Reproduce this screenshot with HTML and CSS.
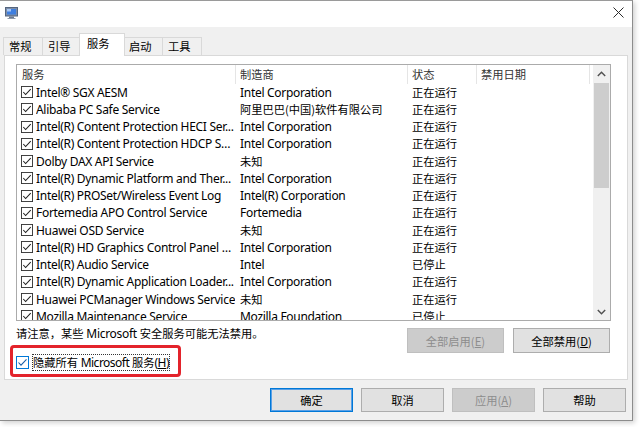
FILE: index.html
```html
<!DOCTYPE html>
<html lang="zh-CN">
<head>
<meta charset="utf-8">
<title>系统配置</title>
<link rel="stylesheet" href="styles.css">
</head>
<body>
<div class="window">
  <div class="titlebar">
    <svg class="app-icon" width="13" height="12" viewBox="0 0 13 12">
      <rect x="0.5" y="0.5" width="12" height="8.5" fill="#7d8ea8" stroke="#55657e"/>
      <rect x="2" y="2" width="9" height="5.5" fill="#3f7fe0"/>
      <rect x="2" y="2" width="4" height="2.5" fill="#a9c8f5"/>
      <rect x="4" y="9.5" width="5" height="1.5" fill="#6d7b90"/>
      <rect x="2.5" y="11" width="8" height="1" fill="#8f9aab"/>
    </svg>
    <span class="close" aria-label="关闭">
      <svg width="11" height="11" viewBox="0 0 11 11"><path d="M0.5 0.5 L10.5 10.5 M10.5 0.5 L0.5 10.5" stroke="#2b2b2b" stroke-width="1"/></svg>
    </span>
  </div>
  <div class="client">
    <div class="tabs">
      <div class="tab">常规</div>
      <div class="tab">引导</div>
      <div class="tab active">服务</div>
      <div class="tab">启动</div>
      <div class="tab">工具</div>
    </div>
    <div class="panel">
      <div class="listview">
        <div class="list-main">
          <div class="lv-header">
            <div class="hcell first">服务</div>
            <div class="hcell">制造商</div>
            <div class="hcell">状态</div>
            <div class="hcell">禁用日期</div>
          </div>
          <div class="rows">
            <div class="row"><div class="c1"><svg class="cb" viewBox="0 0 13 13"><rect x="0.5" y="0.5" width="12" height="12"/><polyline points="2.5,6.5 5,9.2 10.5,3.3"/></svg><span class="txt">Intel® SGX AESM</span></div><div class="c2">Intel Corporation</div><div class="c3">正在运行</div><div class="c4"></div></div>
            <div class="row"><div class="c1"><svg class="cb" viewBox="0 0 13 13"><rect x="0.5" y="0.5" width="12" height="12"/><polyline points="2.5,6.5 5,9.2 10.5,3.3"/></svg><span class="txt">Alibaba PC Safe Service</span></div><div class="c2 zh">阿里巴巴(中国)软件有限公司</div><div class="c3">正在运行</div><div class="c4"></div></div>
            <div class="row"><div class="c1"><svg class="cb" viewBox="0 0 13 13"><rect x="0.5" y="0.5" width="12" height="12"/><polyline points="2.5,6.5 5,9.2 10.5,3.3"/></svg><span class="txt">Intel(R) Content Protection HECI Ser...</span></div><div class="c2">Intel Corporation</div><div class="c3">正在运行</div><div class="c4"></div></div>
            <div class="row"><div class="c1"><svg class="cb" viewBox="0 0 13 13"><rect x="0.5" y="0.5" width="12" height="12"/><polyline points="2.5,6.5 5,9.2 10.5,3.3"/></svg><span class="txt">Intel(R) Content Protection HDCP Se...</span></div><div class="c2">Intel Corporation</div><div class="c3">正在运行</div><div class="c4"></div></div>
            <div class="row"><div class="c1"><svg class="cb" viewBox="0 0 13 13"><rect x="0.5" y="0.5" width="12" height="12"/><polyline points="2.5,6.5 5,9.2 10.5,3.3"/></svg><span class="txt">Dolby DAX API Service</span></div><div class="c2 zh">未知</div><div class="c3">正在运行</div><div class="c4"></div></div>
            <div class="row"><div class="c1"><svg class="cb" viewBox="0 0 13 13"><rect x="0.5" y="0.5" width="12" height="12"/><polyline points="2.5,6.5 5,9.2 10.5,3.3"/></svg><span class="txt">Intel(R) Dynamic Platform and Ther...</span></div><div class="c2">Intel Corporation</div><div class="c3">正在运行</div><div class="c4"></div></div>
            <div class="row"><div class="c1"><svg class="cb" viewBox="0 0 13 13"><rect x="0.5" y="0.5" width="12" height="12"/><polyline points="2.5,6.5 5,9.2 10.5,3.3"/></svg><span class="txt">Intel(R) PROSet/Wireless Event Log</span></div><div class="c2">Intel(R) Corporation</div><div class="c3">正在运行</div><div class="c4"></div></div>
            <div class="row"><div class="c1"><svg class="cb" viewBox="0 0 13 13"><rect x="0.5" y="0.5" width="12" height="12"/><polyline points="2.5,6.5 5,9.2 10.5,3.3"/></svg><span class="txt">Fortemedia APO Control Service</span></div><div class="c2">Fortemedia</div><div class="c3">正在运行</div><div class="c4"></div></div>
            <div class="row"><div class="c1"><svg class="cb" viewBox="0 0 13 13"><rect x="0.5" y="0.5" width="12" height="12"/><polyline points="2.5,6.5 5,9.2 10.5,3.3"/></svg><span class="txt">Huawei OSD Service</span></div><div class="c2 zh">未知</div><div class="c3">正在运行</div><div class="c4"></div></div>
            <div class="row"><div class="c1"><svg class="cb" viewBox="0 0 13 13"><rect x="0.5" y="0.5" width="12" height="12"/><polyline points="2.5,6.5 5,9.2 10.5,3.3"/></svg><span class="txt">Intel(R) HD Graphics Control Panel S...</span></div><div class="c2">Intel Corporation</div><div class="c3">正在运行</div><div class="c4"></div></div>
            <div class="row"><div class="c1"><svg class="cb" viewBox="0 0 13 13"><rect x="0.5" y="0.5" width="12" height="12"/><polyline points="2.5,6.5 5,9.2 10.5,3.3"/></svg><span class="txt">Intel(R) Audio Service</span></div><div class="c2">Intel</div><div class="c3">已停止</div><div class="c4"></div></div>
            <div class="row"><div class="c1"><svg class="cb" viewBox="0 0 13 13"><rect x="0.5" y="0.5" width="12" height="12"/><polyline points="2.5,6.5 5,9.2 10.5,3.3"/></svg><span class="txt">Intel(R) Dynamic Application Loader...</span></div><div class="c2">Intel Corporation</div><div class="c3">正在运行</div><div class="c4"></div></div>
            <div class="row"><div class="c1"><svg class="cb" viewBox="0 0 13 13"><rect x="0.5" y="0.5" width="12" height="12"/><polyline points="2.5,6.5 5,9.2 10.5,3.3"/></svg><span class="txt">Huawei PCManager Windows Service</span></div><div class="c2 zh">未知</div><div class="c3">正在运行</div><div class="c4"></div></div>
            <div class="row"><div class="c1"><svg class="cb" viewBox="0 0 13 13"><rect x="0.5" y="0.5" width="12" height="12"/><polyline points="2.5,6.5 5,9.2 10.5,3.3"/></svg><span class="txt">Mozilla Maintenance Service</span></div><div class="c2">Mozilla Foundation</div><div class="c3">已停止</div><div class="c4"></div></div>
          </div>
        </div>
        <div class="scrollbar">
          <div class="sb-btn"><svg width="9" height="6" viewBox="0 0 9 6"><polyline points="0.8,5 4.5,1.2 8.2,5" fill="none" stroke="#505050" stroke-width="1.4"/></svg></div>
          <div class="sb-track"><div class="sb-thumb"></div></div>
          <div class="sb-btn"><svg width="9" height="6" viewBox="0 0 9 6"><polyline points="0.8,1 4.5,4.8 8.2,1" fill="none" stroke="#505050" stroke-width="1.4"/></svg></div>
        </div>
      </div>
      <div class="bottom">
        <div class="left-col">
          <div class="note"><span class="zh">请注意，某些</span> Microsoft <span class="zh">安全服务可能无法禁用。</span></div>
          <div class="highlight">
            <svg class="cb blue" viewBox="0 0 13 13"><rect x="0.5" y="0.5" width="12" height="12"/><polyline points="2.5,6.5 5,9.2 10.5,3.3"/></svg>
            <span class="focus-label"><span class="zh">隐藏所有</span> Microsoft <span class="zh">服务</span>(<u>H</u>)</span>
          </div>
        </div>
        <div class="actions">
          <button class="btn disabled" disabled>全部启用(<u>E</u>)</button>
          <button class="btn">全部禁用(<u>D</u>)</button>
        </div>
      </div>
    </div>
    <div class="footer">
      <button class="btn fbtn default">确定</button>
      <button class="btn fbtn">取消</button>
      <button class="btn fbtn disabled" disabled>应用(<u>A</u>)</button>
      <button class="btn fbtn">帮助</button>
    </div>
  </div>
</div>
</body>
</html>
```

FILE: styles.css
```css
html, body {
  margin: 0;
  padding: 0;
  background: #ffffff;
}

body {
  width: 640px;
  height: 427px;
  overflow: hidden;
  font-family: "Noto Sans", "Noto Sans CJK SC", sans-serif;
  font-size: 12px;
  letter-spacing: -0.3px;
  color: #000;
}

.zh {
  font-family: "Noto Sans CJK SC", sans-serif;
  font-size: 11.25px;
  letter-spacing: 0;
}

.window {
  width: 633px;
  height: 421px;
  box-sizing: border-box;
  border-top: 1px solid #9a9a9a;
  border-right: 1px solid #8c8c8c;
  border-bottom: 1px solid #8c8c8c;
  background: #f0f0f0;
  box-shadow: 2px 2px 5px rgba(0, 0, 0, 0.18);
  display: flex;
  flex-direction: column;
}

.titlebar {
  height: 26px;
  background: #ffffff;
  display: flex;
  align-items: center;
  justify-content: space-between;
  padding: 0 8px 0 5px;
  flex-shrink: 0;
}

.app-icon {
  display: block;
  margin-top: -2px;
}

.close {
  display: flex;
  width: 11px;
  height: 11px;
  margin-top: -3px;
}

.client {
  flex: 1;
  display: flex;
  flex-direction: column;
  padding-top: 6px;
}

.tabs {
  display: flex;
  align-items: flex-end;
  height: 22px;
  padding-left: 3px;
  position: relative;
  z-index: 2;
}

.tab {
  box-sizing: border-box;
  width: 40px;
  height: 18px;
  margin-right: -1px;
  padding-left: 5px;
  border: 1px solid #d9d9d9;
  border-bottom: none;
  background: #f0f0f0;
  line-height: 16px;
  font-family: "Noto Sans CJK SC", sans-serif;
  font-size: 11.25px;
  letter-spacing: 0;
  color: #000;
}

.tab.active {
  width: 46px;
  height: 23px;
  margin: 0 -2px -1px -2px;
  padding-left: 7px;
  background: #ffffff;
  line-height: 18px;
  position: relative;
  z-index: 3;
}

.panel {
  box-sizing: border-box;
  width: 624px;
  height: 325px;
  margin-left: 4px;
  background: #ffffff;
  border: 1px solid #d9d9d9;
  padding: 8px 0 0 11px;
  position: relative;
  z-index: 1;
}

.listview {
  box-sizing: border-box;
  width: 595px;
  height: 257px;
  border: 1px solid #ababab;
  display: flex;
  background: #ffffff;
}

.list-main {
  flex: 1;
  overflow: hidden;
  display: flex;
  flex-direction: column;
}

.lv-header {
  display: grid;
  grid-template-columns: 219px 172px 69px 113px;
  height: 18.5px;
  flex-shrink: 0;
}

.hcell {
  padding-left: 4px;
  border-right: 1px solid #e5e5e5;
  line-height: 18px;
  color: #333;
  font-family: "Noto Sans CJK SC", sans-serif;
  font-size: 11.25px;
  letter-spacing: 0;
}

.hcell.first {
  padding-left: 5px;
}

.rows {
  overflow: hidden;
  flex: 1;
}

.row {
  display: grid;
  grid-template-columns: 219px 172px 69px 1fr;
  height: 17.25px;
  align-items: center;
  line-height: 17px;
  white-space: nowrap;
}

.c1 {
  display: flex;
  align-items: center;
  padding-left: 4px;
  overflow: hidden;
}

.c2, .c3 {
  padding-left: 4px;
  overflow: hidden;
  text-overflow: ellipsis;
}

.c3 {
  font-family: "Noto Sans CJK SC", sans-serif;
  font-size: 11.25px;
  letter-spacing: 0;
}

.txt {
  overflow: hidden;
  text-overflow: ellipsis;
}

.cb {
  width: 12px;
  height: 12px;
  flex-shrink: 0;
  margin-right: 3px;
}

.cb rect {
  fill: #ffffff;
  stroke: #333333;
  stroke-width: 1;
}

.cb polyline {
  fill: none;
  stroke: #1e1e1e;
  stroke-width: 1.1;
}

.cb.blue rect {
  stroke: #0078d7;
}

.cb.blue polyline {
  stroke: #1a5fa8;
}

.scrollbar {
  width: 17px;
  background: #f0f0f0;
  display: flex;
  flex-direction: column;
}

.sb-btn {
  height: 17px;
  display: flex;
  align-items: center;
  justify-content: center;
  flex-shrink: 0;
}

.sb-track {
  flex: 1;
  padding: 1px 1px 0 1px;
}

.sb-thumb {
  height: 105px;
  background: #cdcdcd;
}

.bottom {
  display: grid;
  grid-template-columns: 1fr auto;
  margin-top: 5px;
}

.note {
  line-height: 15px;
  color: #000;
}

.highlight {
  box-sizing: border-box;
  width: 171px;
  height: 32px;
  margin: 4px 0 0 -6px;
  border: 3px solid #e3232b;
  border-radius: 4px;
  display: flex;
  align-items: center;
  padding-left: 3px;
  padding-top: 2px;
}

.highlight .cb {
  width: 13px;
  height: 13px;
  margin-right: 3px;
}

.focus-label {
  border: 1px dotted #333;
  padding: 0;
  line-height: 14px;
  white-space: nowrap;
  letter-spacing: -0.5px;
}

.actions {
  display: flex;
  gap: 9px;
  margin: 2px 17px 0 0;
  align-self: start;
}

.btn {
  box-sizing: border-box;
  width: 97px;
  height: 25px;
  background: #e1e1e1;
  border: 1px solid #adadad;
  font-family: "Noto Sans CJK SC", sans-serif;
  font-size: 11.25px;
  letter-spacing: 0;
  color: #000;
  padding: 0;
  margin: 0;
}

.btn.disabled {
  background: #cccccc;
  border-color: #bfbfbf;
  color: #8d8d8d;
}

.footer {
  display: flex;
  justify-content: flex-end;
  gap: 8px;
  padding: 8px 6px 0 0;
}

.fbtn {
  width: 83px;
  height: 24px;
}

.fbtn.default {
  border: 1px solid #0078d7;
  box-shadow: inset 0 0 0 1px #5aa0e6;
}
```
